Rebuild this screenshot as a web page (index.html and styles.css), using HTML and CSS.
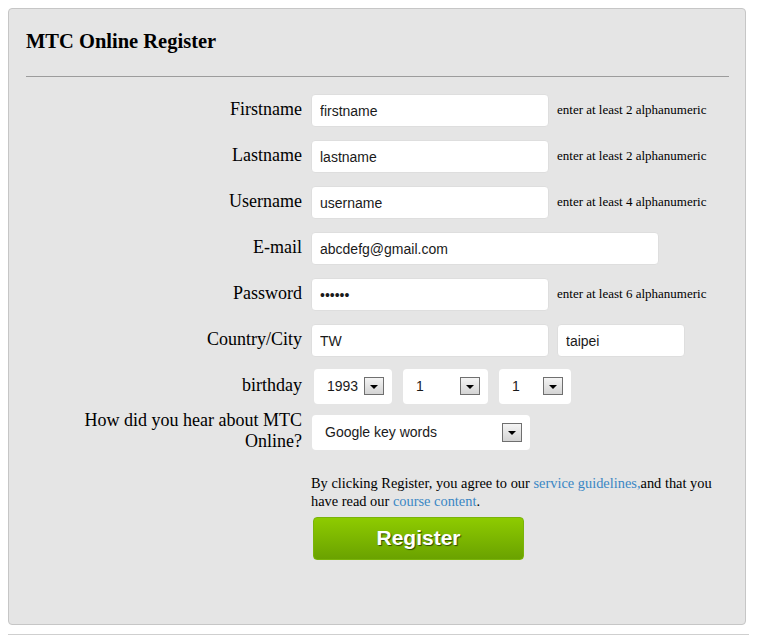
FILE: index.html
```html
<!DOCTYPE html>
<html lang="en">
<head>
<meta charset="utf-8">
<title>MTC Online Register</title>
<link rel="stylesheet" href="styles.css">
</head>
<body>
<div class="panel">
  <h1 class="title">MTC Online Register</h1>
  <hr class="rule">
  <form class="form">
    <div class="row">
      <label class="lbl">Firstname</label>
      <div class="field"><input class="txt w-md" type="text" value="firstname"><span class="hint">enter at least 2 alphanumeric</span></div>
    </div>
    <div class="row">
      <label class="lbl">Lastname</label>
      <div class="field"><input class="txt w-md" type="text" value="lastname"><span class="hint">enter at least 2 alphanumeric</span></div>
    </div>
    <div class="row">
      <label class="lbl">Username</label>
      <div class="field"><input class="txt w-md" type="text" value="username"><span class="hint">enter at least 4 alphanumeric</span></div>
    </div>
    <div class="row">
      <label class="lbl">E-mail</label>
      <div class="field"><input class="txt w-lg" type="text" value="abcdefg@gmail.com"></div>
    </div>
    <div class="row">
      <label class="lbl">Password</label>
      <div class="field"><input class="txt w-md" type="password" value="123456"><span class="hint">enter at least 6 alphanumeric</span></div>
    </div>
    <div class="row">
      <label class="lbl">Country/City</label>
      <div class="field"><input class="txt w-md" type="text" value="TW"><input class="txt w-sm" type="text" value="taipei"></div>
    </div>
    <div class="row row-sel row-bday">
      <label class="lbl">birthday</label>
      <div class="field field-bday">
        <div class="sel sel-year"><select class="sel-in"><option>1993</option></select><span class="sel-btn"></span></div>
        <div class="sel sel-month"><select class="sel-in"><option>1</option></select><span class="sel-btn"></span></div>
        <div class="sel sel-day"><select class="sel-in"><option>1</option></select><span class="sel-btn"></span></div>
      </div>
    </div>
    <div class="row row-sel row-hear">
      <label class="lbl"><span class="lbl-wrap">How did you hear about MTC Online?</span></label>
      <div class="field">
        <div class="sel sel-hear"><select class="sel-in"><option>Google key words</option></select><span class="sel-btn"></span></div>
      </div>
    </div>
    <div class="agree-row">
      <p class="agree">By clicking Register, you agree to our <a href="#" class="lnk">service guidelines,</a>and that you have read our <a href="#" class="lnk">course content</a>.</p>
      <button type="button" class="btn">Register</button>
    </div>
  </form>
</div>
<div class="foot"></div>
</body>
</html>
```
FILE: styles.css
```css
html { background: #fff; }
body {
  margin: 8px;
  font-family: "Liberation Serif", "Times New Roman", serif;
  color: #000;
}
.panel {
  box-sizing: content-box;
  width: 703px;
  background: #e5e5e5;
  border: 1px solid #c6c6c6;
  border-radius: 4px;
  padding: 21px 16px 64px 17px;
}
.title {
  margin: 0;
  font-size: 20.5px;
  line-height: 23px;
  font-weight: bold;
}
.rule {
  margin: 23px 0 0 0;
  border: 0;
  border-top: 1px solid #9c9c9c;
  height: 0;
}
.form {
  margin: 17px 0 0 0;
}
.row {
  display: flex;
  align-items: center;
  height: 33px;
  margin-top: 13px;
}
.row:first-child { margin-top: 0; }
.row-sel { height: 35px; }
.row-bday { margin-top: 12px; }
.row-hear { margin-top: 11px; }
.lbl {
  flex: 0 0 276px;
  text-align: right;
  font-size: 18px;
  line-height: 21px;
  padding-bottom: 3px;
}
.lbl-wrap {
  display: inline-block;
  max-width: 222px;
}
.field {
  display: flex;
  align-items: center;
  gap: 8px;
  margin-left: 9px;
}
.txt {
  box-sizing: border-box;
  height: 33px;
  border: 1px solid #dedede;
  border-radius: 4px;
  background: #fff;
  padding: 0 8px;
  font-family: "Liberation Sans", Arial, sans-serif;
  font-size: 14px;
  color: #1a1a1a;
  outline: none;
}
.w-md { width: 238px; }
.w-lg { width: 348px; }
.w-sm { width: 128px; }
.hint {
  font-size: 13px;
  line-height: 15px;
  padding-bottom: 3px;
}
.field-bday { gap: 11px; margin-left: 12px; }
.sel {
  box-sizing: border-box;
  height: 35px;
  display: flex;
  align-items: center;
  background: #fff;
  border-radius: 4px;
  padding: 0 8px 1px 0;
}
.sel-year { width: 78px; }
.sel-month { width: 85px; }
.sel-day { width: 72px; }
.sel-hear { width: 218px; margin-left: 1px; }
.sel-in {
  -webkit-appearance: none;
  appearance: none;
  flex: 1 1 auto;
  min-width: 0;
  border: 0;
  background: transparent;
  padding: 0 0 0 13px;
  margin: 0;
  font-family: "Liberation Sans", Arial, sans-serif;
  font-size: 14px;
  color: #1a1a1a;
  outline: none;
}
.sel-btn {
  box-sizing: border-box;
  flex: 0 0 20px;
  height: 18px;
  border: 1px solid #6f6f6f;
  background: linear-gradient(#f4f4f4, #d4d4d4);
  display: flex;
  align-items: center;
  justify-content: center;
}
.sel-hear .sel-btn { height: 19px; }
.sel-btn::after {
  content: "";
  width: 0;
  height: 0;
  border-left: 4px solid transparent;
  border-right: 4px solid transparent;
  border-top: 4px solid #000;
  margin-top: 1px;
}
.agree-row {
  margin: 24px 0 0 285px;
}
.agree {
  margin: 0;
  font-size: 14.4px;
  line-height: 18px;
}
.lnk {
  color: #3a87c4;
  text-decoration: none;
}
.btn {
  display: block;
  margin: 7px 0 0 2px;
  width: 211px;
  height: 43px;
  box-sizing: border-box;
  border: 1px solid #7ab40a;
  border-radius: 4px;
  background: linear-gradient(#8ecb00, #6aa200);
  color: #fff;
  font-family: "Liberation Sans", Arial, sans-serif;
  font-weight: bold;
  font-size: 21px;
  text-shadow: 1px 1px 1px #2f4a00;
  padding: 0 0 2px 0;
  cursor: pointer;
}
.foot {
  margin: 9px -8px 0 -8px;
  border-top: 1px solid #cfcfcf;
}
```
